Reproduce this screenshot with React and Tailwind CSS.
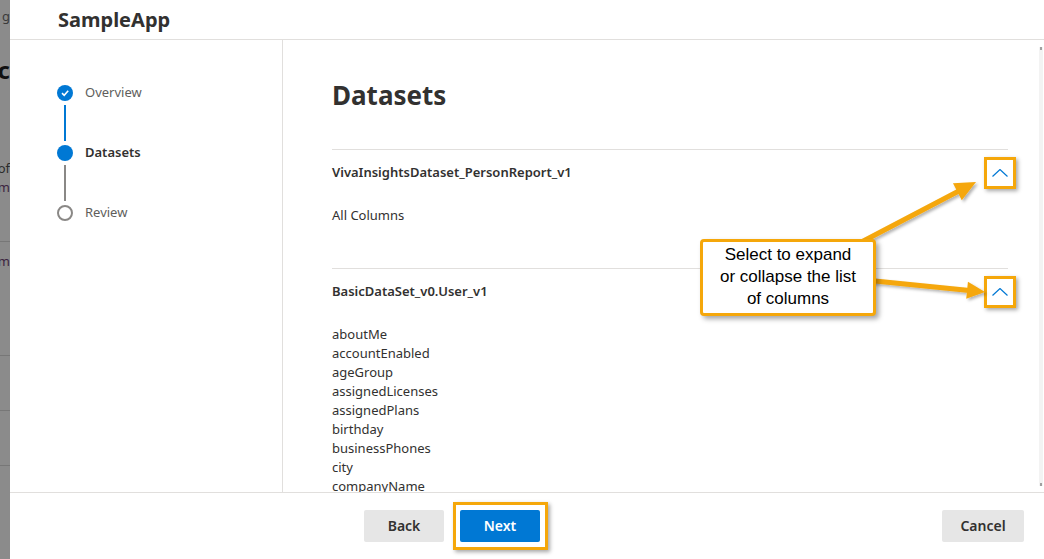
import React from 'react';

const ORANGE = '#f5a70a';

function arrowPoints(x1, y1, x2, y2, shaft, headLen, headW) {
  const dx = x2 - x1;
  const dy = y2 - y1;
  const len = Math.sqrt(dx * dx + dy * dy);
  const ux = dx / len;
  const uy = dy / len;
  const px = -uy;
  const py = ux;
  const bx = x2 - ux * headLen;
  const by = y2 - uy * headLen;
  const pts = [
    [x1 + px * shaft / 2, y1 + py * shaft / 2],
    [bx + px * shaft / 2, by + py * shaft / 2],
    [bx + px * headW / 2, by + py * headW / 2],
    [x2, y2],
    [bx - px * headW / 2, by - py * headW / 2],
    [bx - px * shaft / 2, by - py * shaft / 2],
    [x1 - px * shaft / 2, y1 - py * shaft / 2],
  ];
  return pts.map(p => p.join(',')).join(' ');
}

const columns = [
  'aboutMe',
  'accountEnabled',
  'ageGroup',
  'assignedLicenses',
  'assignedPlans',
  'birthday',
  'businessPhones',
  'city',
  'companyName',
];

function Chevron() {
  return (
    <div className="relative w-[16px] h-[8px]">
      <svg width="16" height="8" viewBox="0 0 16 8" className="block">
        <polyline points="0.5,7.5 8,0.5 15.5,7.5" fill="none" stroke="#0078d4" strokeWidth="1.2" />
      </svg>
      <div
        className="absolute left-[-8px] top-[-12px] w-[32px] h-[32px] border-[3px] shadow-[2px_2px_4px_rgba(0,0,0,0.35)]"
        style={{ borderColor: ORANGE }}
      />
    </div>
  );
}

function StepDot({ state }) {
  if (state === 'done') {
    return (
      <div className="w-[16px] h-[16px] rounded-full bg-[#0078d4] flex items-center justify-center">
        <svg width="10" height="10" viewBox="0 0 10 10">
          <polyline points="2,5.2 4.2,7.3 8.2,2.8" fill="none" stroke="white" strokeWidth="1.6" />
        </svg>
      </div>
    );
  }
  if (state === 'current') {
    return <div className="w-[16px] h-[16px] rounded-full bg-[#0078d4]" />;
  }
  return <div className="w-[16px] h-[16px] rounded-full border-2 border-[#8a8886] bg-white" />;
}

function Step({ label, state }) {
  return (
    <div className="flex items-center h-[16px] gap-[12px]">
      <StepDot state={state} />
      <span
        className={
          state === 'current'
            ? 'text-[13px] font-semibold text-[#323130]'
            : 'text-[13px] text-[#605e5c]'
        }
      >
        {label}
      </span>
    </div>
  );
}

function Connector({ color }) {
  return (
    <div className="h-[44px] w-[16px] flex justify-center py-[4px]">
      <div className={`w-[2px] h-full ${color}`} />
    </div>
  );
}

export default function App() {
  return (
    <div
      className="relative w-[1044px] h-[559px] flex overflow-hidden bg-white"
      style={{ fontFamily: '"Noto Sans", "Open Sans", sans-serif' }}
    >
      {/* dimmed page behind the panel */}
      <div className="w-[10px] shrink-0 bg-[#8b8b8b] flex flex-col overflow-hidden text-[#2b2b2b]">
        <div className="h-[34px] flex justify-end items-center whitespace-nowrap text-[13px] text-[#3a3a3a]">g</div>
        <div className="h-[72px] flex justify-end items-center whitespace-nowrap text-[24px] font-bold text-[#111]">c</div>
        <div className="h-[72px] flex justify-end items-end whitespace-nowrap text-[13px]">of</div>
        <div className="h-[20px] flex justify-end items-center whitespace-nowrap text-[13px] text-[#3b2440]">m</div>
        <div className="h-[44px] border-b border-[#777]" />
        <div className="h-[40px] flex justify-end items-center whitespace-nowrap text-[13px] text-[#3b2440]">m</div>
        <div className="h-[74px] border-b border-[#777]" />
        <div className="h-[55px] border-b border-[#777]" />
        <div className="h-[55px] border-b border-[#777]" />
      </div>

      {/* panel */}
      <div className="flex-1 flex flex-col min-w-0">
        <div className="h-[40px] shrink-0 border-b border-[#e1dfdd] pl-[48px] flex items-center">
          <span className="text-[20px] font-bold text-[#323130]">SampleApp</span>
        </div>

        <div className="flex-1 flex min-h-0">
          <div className="w-[273px] shrink-0 border-r border-[#e1dfdd] pl-[47px] pt-[45px]">
            <Step label="Overview" state="done" />
            <Connector color="bg-[#0078d4]" />
            <Step label="Datasets" state="current" />
            <Connector color="bg-[#8a8886]" />
            <Step label="Review" state="todo" />
          </div>

          <div className="flex-1 flex min-w-0">
            <div className="flex-1 overflow-hidden pl-[49px] pr-[30px] pt-[37px] text-[#323130]">
              <h1 className="text-[26px] leading-[36px] font-bold">Datasets</h1>

              <div className="mt-[36px] border-t border-[#e1dfdd]">
                <div className="h-[45px] flex items-center justify-between">
                  <span className="text-[13px] font-semibold">VivaInsightsDataset_PersonReport_v1</span>
                  <Chevron />
                </div>
                <div className="pt-[11px] pb-[43px] text-[13px] leading-[19px]">All Columns</div>
              </div>

              <div className="border-t border-[#e1dfdd]">
                <div className="h-[45px] flex items-center justify-between">
                  <span className="text-[13px] font-semibold">BasicDataSet_v0.User_v1</span>
                  <Chevron />
                </div>
                <div className="pt-[11px] text-[13px] leading-[19px]">
                  {columns.map(c => (
                    <div key={c}>{c}</div>
                  ))}
                </div>
              </div>
            </div>

            <div className="w-[6px] shrink-0 pt-[7px] pb-[6px] flex flex-col items-center">
              <div className="w-[4px] flex-1 bg-[#f3f3f3] flex flex-col justify-between items-center">
                <div className="w-[2px] h-[3px] bg-[#a0a0a0]" />
                <div className="w-[2px] h-[3px] bg-[#a0a0a0]" />
              </div>
            </div>
          </div>
        </div>

        <div className="h-[67px] shrink-0 border-t border-[#e1dfdd] flex items-center pl-[354px] pr-[20px]">
          <button className="w-[80px] h-[32px] rounded-[2px] bg-[#e6e6e6] text-[14px] leading-[32px] font-semibold text-[#323130]">
            Back
          </button>
          <div className="relative ml-[16px]">
            <button className="w-[80px] h-[32px] rounded-[2px] bg-[#0078d4] text-[14px] leading-[32px] font-semibold text-white">
              Next
            </button>
            <div
              className="absolute left-[-7px] right-[-8px] top-[-8px] bottom-[-8px] border-[3px] shadow-[2px_2px_4px_rgba(0,0,0,0.35)]"
              style={{ borderColor: ORANGE }}
            />
          </div>
          <button className="ml-auto w-[82px] h-[32px] rounded-[2px] bg-[#e6e6e6] text-[14px] leading-[32px] font-semibold text-[#323130]">
            Cancel
          </button>
        </div>
      </div>

      {/* annotation arrows */}
      <svg className="absolute inset-0 pointer-events-none" width="1044" height="559">
        <defs>
          <filter id="sh" x="-10%" y="-10%" width="130%" height="140%">
            <feDropShadow dx="2" dy="2" stdDeviation="1.5" floodColor="#000" floodOpacity="0.3" />
          </filter>
        </defs>
        <polygon points={arrowPoints(850, 248, 976, 182, 5, 21, 19)} fill={ORANGE} filter="url(#sh)" />
        <polygon points={arrowPoints(865, 280, 985, 292, 5, 18, 17)} fill={ORANGE} filter="url(#sh)" />
      </svg>

      {/* callout */}
      <div
        className="absolute left-[700px] top-[239px] w-[176px] h-[77px] bg-white border-[3px] rounded-[4px] flex items-center justify-center text-center pb-[2px] shadow-[3px_3px_5px_rgba(0,0,0,0.35)]"
        style={{ borderColor: ORANGE, fontFamily: '"Liberation Sans", Arial, sans-serif' }}
      >
        <div className="text-[17px] leading-[22px] text-black">
          Select to expand
          <br />
          or collapse the list
          <br />
          of columns
        </div>
      </div>
    </div>
  );
}
